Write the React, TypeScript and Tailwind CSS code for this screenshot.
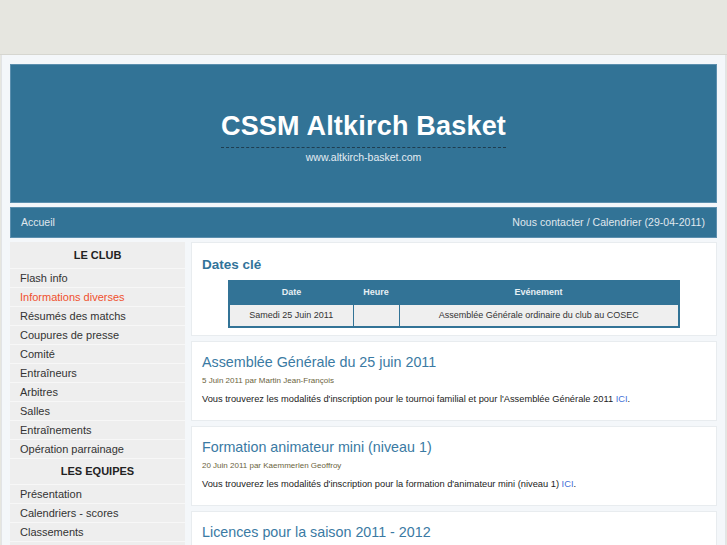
import React from "react";

const clubLinks = [
  "Flash info",
  "Informations diverses",
  "Résumés des matchs",
  "Coupures de presse",
  "Comité",
  "Entraîneurs",
  "Arbitres",
  "Salles",
  "Entraînements",
  "Opération parrainage",
];

const teamLinks = ["Présentation", "Calendriers - scores", "Classements", ""];

const articles = [
  {
    title: "Assemblée Générale du 25 juin 2011",
    meta: "5 Juin 2011 par Martin Jean-François",
    text: "Vous trouverez les modalités d'inscription pour le tournoi familial et pour l'Assemblée Générale 2011",
  },
  {
    title: "Formation animateur mini (niveau 1)",
    meta: "20 Juin 2011 par Kaemmerlen Geoffroy",
    text: "Vous trouverez les modalités d'inscription pour la formation d'animateur mini (niveau 1)",
  },
  {
    title: "Licences pour la saison 2011 - 2012",
    meta: "",
    text: "",
  },
];

const App = () => {
  return (
    <div className="h-[545px] overflow-hidden bg-[#e6e6e0] font-['Liberation_Sans',Arial,sans-serif]">
      {/* top band */}
      <div className="h-[55px] border-b border-[#d6d6d0]" />

      <div className="mx-[1px] bg-[#f4f7fa] border-x border-[#e2e4e6] px-[8px] pt-[9px] h-[490px]">
        {/* Header */}
        <div className="h-[139px] bg-[#327396] border border-[#5c8fae] flex flex-col items-center pt-[45px]">
          <h1 className="text-white font-bold text-[27px] leading-[32px] tracking-[0.2px] pb-[5px] border-b border-dashed border-[#1e3d50]">
            CSSM Altkirch Basket
          </h1>
          <p className="text-[#e4edf3] text-[10.5px] mt-[2px]">www.altkirch-basket.com</p>
        </div>

        {/* Nav */}
        <div className="mt-[4px] h-[31px] bg-[#327396] border border-[#5c8fae] flex items-center justify-between pl-[10px] pr-[11px] text-[10.5px] text-[#e0e8ee]">
          <span>Accueil</span>
          <span className="tracking-[0.05px]">Nous contacter / Calendrier (29-04-2011)</span>
        </div>

        <div className="mt-[4px] flex gap-[6px] items-start">
          {/* Sidebar */}
          <div className="w-[175px] shrink-0 bg-[#eeeeee] text-[11px] text-[#333]">
            <div className="h-[26px] flex items-center justify-center font-bold text-[#222]">LE CLUB</div>
            {clubLinks.map((l) => (
              <div
                key={l}
                className={`h-[19px] flex items-center pl-[10px] border-t border-[#f7f7f7] ${
                  l === "Informations diverses" ? "text-[#f0502d]" : ""
                }`}
              >
                {l}
              </div>
            ))}
            <div className="h-[26px] flex items-center justify-center font-bold text-[#222] border-t border-[#f7f7f7]">
              LES EQUIPES
            </div>
            {teamLinks.map((l, i) => (
              <div key={i} className="h-[19px] flex items-center pl-[10px] border-t border-[#f7f7f7]">
                {l}
              </div>
            ))}
          </div>

          {/* Content */}
          <div className="flex-1 flex flex-col gap-[5px]">
            <div className="bg-white border border-[#e8ecef] px-[10px] pt-[13px] pb-[7px]">
              <h2 className="text-[#31739a] font-bold text-[13.5px] leading-[18px]">Dates clé</h2>
              <table className="mt-[6px] mx-auto w-[452px] border-2 border-[#327396] border-collapse text-[9px]">
                <thead>
                  <tr className="bg-[#327396] text-[#e6eef3] font-bold h-[23px]">
                    <th className="w-[124px] font-bold">Date</th>
                    <th className="w-[46px] font-bold">Heure</th>
                    <th className="font-bold">Evénement</th>
                  </tr>
                </thead>
                <tbody>
                  <tr className="bg-[#efefef] text-[#333] h-[23px]">
                    <td className="text-center border border-[#327396]">Samedi 25 Juin 2011</td>
                    <td className="border border-[#327396]" />
                    <td className="text-center border border-[#327396]">
                      Assemblée Générale ordinaire du club au COSEC
                    </td>
                  </tr>
                </tbody>
              </table>
            </div>

            {articles.map((a) => (
              <div key={a.title} className="bg-white border border-[#e8ecef] px-[10px] pt-[10px] pb-[13px]">
                <h3 className="text-[#3a7aa3] text-[14.3px] leading-[20px]">{a.title}</h3>
                {a.meta && <p className="text-[#6b6440] text-[8px] mt-[3px]">{a.meta}</p>}
                {a.text && (
                  <p className="text-[#222] text-[9.3px] mt-[6px]">
                    {a.text} <span className="text-[#3f6fd8]">ICI</span>.
                  </p>
                )}
              </div>
            ))}
          </div>
        </div>
      </div>
    </div>
  );
};

export default App;
